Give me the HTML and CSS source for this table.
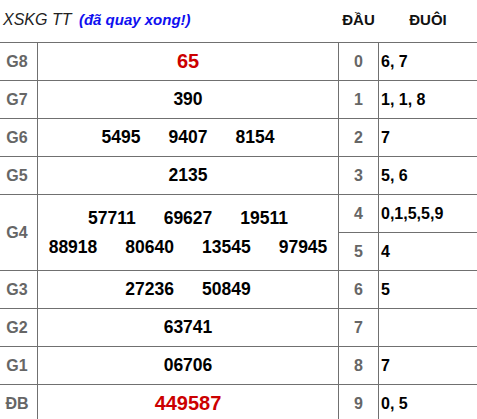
FILE: index.html
```html
<!DOCTYPE html>
<html lang="vi">
<head>
<meta charset="UTF-8">
<meta name="viewport" content="width=device-width, initial-scale=1.0">
<title>XSKG</title>
<link rel="stylesheet" href="styles.css">
</head>
<body>

<div class="kq-head">
  <div class="kq-title">XSKG TT <span class="kq-done">(đã quay xong!)</span></div>
  <div class="kq-hcol">ĐẦU</div>
  <div class="kq-hcol">ĐUÔI</div>
</div>

<div class="kq-grid">
  <div class="lbl">G8</div>
  <div class="num big">65</div>
  <div class="dau">0</div>
  <div class="duoi">6, 7</div>

  <div class="lbl">G7</div>
  <div class="num">390</div>
  <div class="dau">1</div>
  <div class="duoi">1, 1, 8</div>

  <div class="lbl">G6</div>
  <div class="num"><span>5495</span><span>9407</span><span>8154</span></div>
  <div class="dau">2</div>
  <div class="duoi">7</div>

  <div class="lbl">G5</div>
  <div class="num">2135</div>
  <div class="dau">3</div>
  <div class="duoi">5, 6</div>

  <div class="lbl tall">G4</div>
  <div class="num tall multi">
    <div class="line"><span>57711</span><span>69627</span><span>19511</span></div>
    <div class="line"><span>88918</span><span>80640</span><span>13545</span><span>97945</span></div>
  </div>
  <div class="dau">4</div>
  <div class="duoi">0,1,5,5,9</div>
  <div class="dau">5</div>
  <div class="duoi">4</div>

  <div class="lbl">G3</div>
  <div class="num"><span>27236</span><span>50849</span></div>
  <div class="dau">6</div>
  <div class="duoi">5</div>

  <div class="lbl">G2</div>
  <div class="num">63741</div>
  <div class="dau">7</div>
  <div class="duoi"></div>

  <div class="lbl">G1</div>
  <div class="num">06706</div>
  <div class="dau">8</div>
  <div class="duoi">7</div>

  <div class="lbl">ĐB</div>
  <div class="num big">449587</div>
  <div class="dau">9</div>
  <div class="duoi">0, 5</div>
</div>

</body>
</html>
```

FILE: styles.css
```css
body {
  margin: 0;
  padding: 0;
  background-color: #fff;
  font-family: "Liberation Sans", Arial, sans-serif;
}

.kq-head {
  display: grid;
  grid-template-columns: 338px 39px 1fr;
  column-gap: 1px;
  height: 42px;
  align-items: center;
  padding-bottom: 3px;
  box-sizing: border-box;
}

.kq-title {
  padding-left: 3px;
  font-size: 16px;
  font-style: italic;
  color: #222;
}

.kq-done {
  margin-left: 3px;
  font-size: 15px;
  font-weight: bold;
  color: #1010f0;
}

.kq-hcol {
  text-align: center;
  font-size: 15px;
  font-weight: bold;
  color: #111;
}

.kq-grid {
  display: grid;
  grid-template-columns: 37px 300px 39px 1fr;
  grid-auto-rows: 37px;
  gap: 1px;
  background-color: #707070;
  border-top: 1px solid #707070;
}

.kq-grid > div {
  background-color: #fff;
  display: flex;
  align-items: center;
  font-weight: bold;
  font-size: 16px;
}

.lbl {
  justify-content: center;
  padding-right: 3px;
  color: #666;
}

.num {
  justify-content: center;
  gap: 28px;
  color: #000;
}

.kq-grid > .num {
  font-size: 17.5px;
}

.kq-grid > .num.big {
  font-size: 20px;
  color: #cc0000;
}

.tall {
  grid-row: span 2;
}

.num.multi {
  flex-direction: column;
  gap: 0;
}

.line {
  display: flex;
  gap: 28px;
  line-height: 29px;
}

.dau {
  justify-content: center;
  color: #666;
}

.duoi {
  padding-left: 2px;
  color: #000;
}
```
